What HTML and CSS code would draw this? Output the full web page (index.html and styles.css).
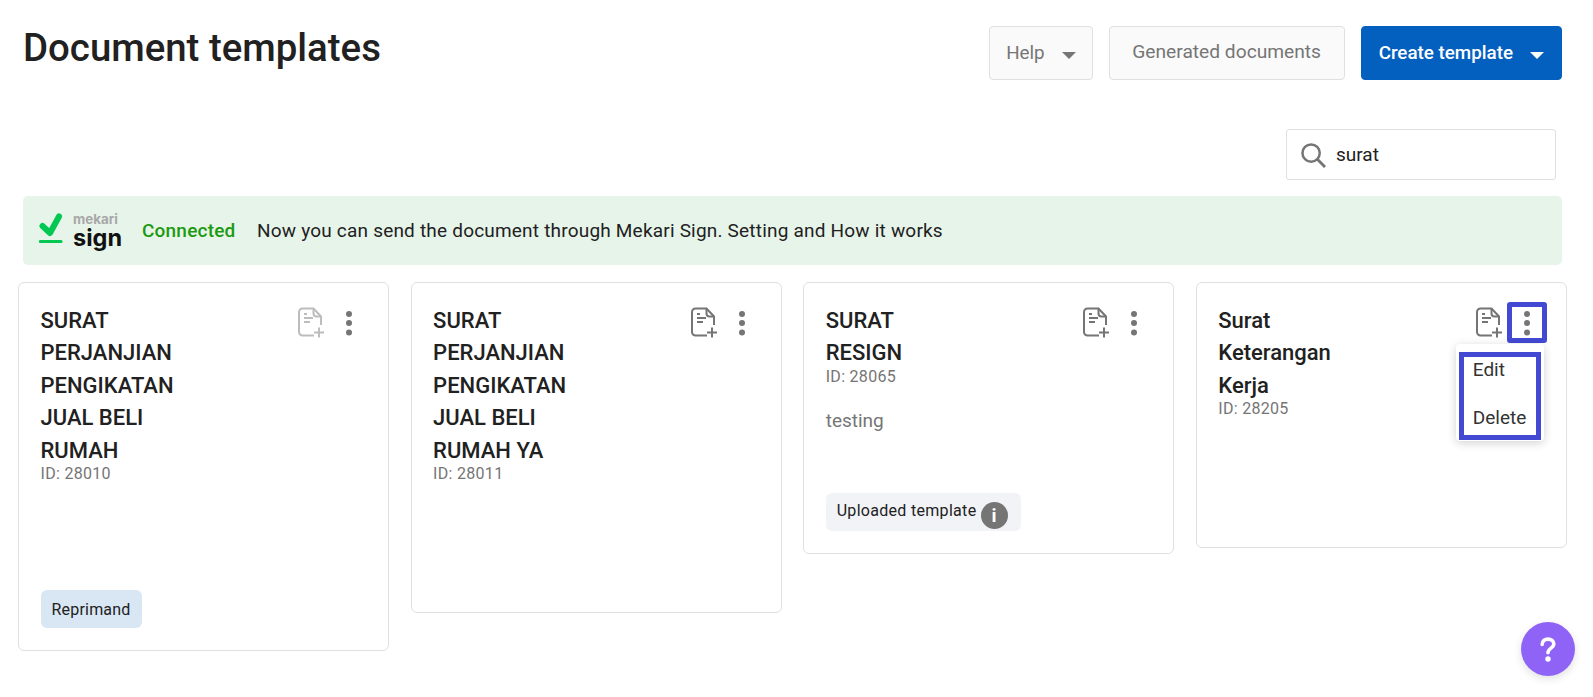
FILE: index.html
```html
<!DOCTYPE html>
<html>
<head>
	<meta charset="utf-8">
	<title>Document templates</title>
	<link rel="stylesheet" href="styles.css">
</head>
<body>
	<svg class="defs" width="0" height="0">
		<symbol id="doc-plus" viewBox="0 0 27 31">
			<path d="M23 18V9.5L15.5 1.5H4.500a3.500 3.500 0 0 0-3.500 3.500V25a3.500 3.500 0 0 0 3.500 3.500H16" fill="none" stroke="currentColor" stroke-width="2"/>
			<path d="M15.500 1.500V6.500a3 3 0 0 0 3 3H23" fill="none" stroke="currentColor" stroke-width="2"/>
			<path d="M6 7H9M6 11H15M6 15H12M21 20.500V30.500M16 25.500H26" fill="none" stroke="currentColor" stroke-width="2"/>
		</symbol>
		<symbol id="kebab" viewBox="0 0 8 26">
			<circle cx="4" cy="4" r="3"/>
			<circle cx="4" cy="13" r="3"/>
			<circle cx="4" cy="22.500" r="3"/>
		</symbol>
	</svg>

	<div class="page">
		<!-- header -->
		<div class="top">
			<h1>Document templates</h1>
			<div class="top-buttons">
				<button class="btn btn-help">Help<span class="caret"></span></button>
				<button class="btn btn-generated">Generated documents</button>
				<button class="btn btn-create">Create template<span class="caret"></span></button>
			</div>
		</div>

		<div class="search-row">
			<div class="search">
				<svg class="search-icon" viewBox="0 0 26 26">
					<circle cx="10.500" cy="10.500" r="9" fill="none" stroke="currentColor" stroke-width="2.600"/>
					<path d="M17 17L25 25" fill="none" stroke="currentColor" stroke-width="3"/>
				</svg>
				<span>surat</span>
			</div>
		</div>

		<!-- mekari sign -->
		<div class="banner">
			<div class="logo">
				<svg class="logo-check" viewBox="0 0 24 31">
					<path d="M3.500 13L11 20L20 3.500" fill="none" stroke="#00c853" stroke-width="6" stroke-linecap="round" stroke-linejoin="round"/>
					<path d="M1.500 28.500H22" fill="none" stroke="#00c853" stroke-width="3.200" stroke-linecap="round"/>
				</svg>
				<div class="logo-text">
					<div class="logo-small">mekari</div>
					<div class="logo-big">sign</div>
				</div>
			</div>
			<span class="connected">Connected</span>
			<span class="banner-text">Now you can send the document through Mekari Sign. Setting and How it works</span>
		</div>

		<!-- cards -->
		<div class="cards">
			<div class="card">
				<div class="card-head">
					<div class="card-title">SURAT PERJANJIAN PENGIKATAN JUAL BELI RUMAH</div>
					<div class="card-actions">
						<svg class="doc-icon doc-icon-off"><use href="#doc-plus"/></svg>
						<span class="kebab"><svg><use href="#kebab"/></svg></span>
					</div>
				</div>
				<div class="card-id">ID: 28010</div>
				<div class="card-body"></div>
				<span class="tag tag-blue">Reprimand</span>
			</div>

			<div class="card">
				<div class="card-head">
					<div class="card-title">SURAT PERJANJIAN PENGIKATAN JUAL BELI RUMAH YA</div>
					<div class="card-actions">
						<svg class="doc-icon"><use href="#doc-plus"/></svg>
						<span class="kebab"><svg><use href="#kebab"/></svg></span>
					</div>
				</div>
				<div class="card-id">ID: 28011</div>
				<div class="card-body"></div>
			</div>

			<div class="card">
				<div class="card-head">
					<div class="card-title">SURAT RESIGN</div>
					<div class="card-actions">
						<svg class="doc-icon"><use href="#doc-plus"/></svg>
						<span class="kebab"><svg><use href="#kebab"/></svg></span>
					</div>
				</div>
				<div class="card-id">ID: 28065</div>
				<div class="card-body">testing</div>
				<span class="tag tag-grey">Uploaded template<span class="info">i</span></span>
			</div>

			<div class="card">
				<div class="card-head">
					<div class="card-title">Surat Keterangan Kerja</div>
					<div class="card-actions">
						<svg class="doc-icon"><use href="#doc-plus"/></svg>
						<span class="kebab kebab-marked"><svg><use href="#kebab"/></svg></span>
						<div class="menu">
							<div class="menu-list">
								<div>Edit</div>
								<div>Delete</div>
							</div>
						</div>
					</div>
				</div>
				<div class="card-id">ID: 28205</div>
				<div class="card-body"></div>
			</div>
		</div>
	</div>

	<div class="fab">
		<svg viewBox="0 0 20 30">
			<path d="M3.500 9.500C3.500 5.500 6.500 3.500 10 3.500C13.500 3.500 16.500 5.500 16.500 9C16.500 13.500 10 13.500 10 18.500" fill="none" stroke="#fff" stroke-width="4" stroke-linecap="round"/>
			<circle cx="10" cy="25.500" r="3" fill="#fff"/>
		</svg>
	</div>
</body>
</html>
```

FILE: styles.css
```css
html,body{
	height:100%;
}
body{
	margin: 0;
	background: #fff;
	color: #212121;
	font-family: Roboto, "Liberation Sans", sans-serif;
	overflow: hidden;
}
.defs{
	position: absolute;
}
.page{
	padding: 26px 31px 0 23px;
}

/* header */
.top{
	display: flex;
	justify-content: space-between;
	align-items: flex-start;
}
h1{
	margin: 0;
	font-size: 38.400px;
	font-weight: 500;
	line-height: 44px;
}
.top-buttons{
	display: flex;
	gap: 16px;
}
.btn{
	height: 54px;
	padding: 0 17px;
	border: 1px solid #e0e0e0;
	border-radius: 4px;
	background: #fafafa;
	color: #757575;
	font-family: inherit;
	font-size: 18.800px;
	display: flex;
	align-items: center;
}
.btn-help{
	padding: 0 16px;
}
.btn-generated{
	width: 236px;
	justify-content: center;
	padding: 0 0 3px;
	font-size: 19.200px;
}
.btn-create{
	background: #0460bf;
	border-color: #0460bf;
	color: #fff;
	font-weight: 500;
}
.caret{
	display: inline-block;
	margin: 4px 0 0 17px;
	border-left: 7px solid transparent;
	border-right: 7px solid transparent;
	border-top: 7px solid currentColor;
}

/* search */
.search-row{
	display: flex;
	justify-content: flex-end;
	margin: 49px 6px 0 0;
}
.search{
	width: 270px;
	height: 51px;
	box-sizing: border-box;
	padding: 0 14px;
	border: 1px solid #e0e0e0;
	border-radius: 3px;
	display: flex;
	align-items: center;
	gap: 10px;
	font-size: 19px;
}
.search-icon{
	width: 25px;
	height: 25px;
	color: #757575;
	margin-top: 2px;
}

/* banner */
.banner{
	height: 69px;
	margin-top: 16px;
	padding-left: 16px;
	background: #e7f4ea;
	border-radius: 5px;
	display: flex;
	align-items: center;
	font-size: 19px;
	letter-spacing: 0.2px;
}
.logo{
	display: flex;
	align-items: center;
	gap: 10px;
	width: 103px;
}
.logo-check{
	width: 24px;
	height: 31px;
	margin-bottom: 4px;
}
.logo-text{
	font-family: Inter, sans-serif;
	font-weight: 700;
	letter-spacing: 0;
}
.logo-small{
	color: #a8a8a8;
	font-size: 13.400px;
	line-height: 15px;
}
.logo-big{
	color: #111;
	font-size: 23.500px;
	line-height: 22px;
}
.connected{
	color: #1b9a12;
	font-weight: 500;
	width: 115px;
}

/* cards */
.cards{
	display: grid;
	grid-template-columns: repeat(4,371px);
	gap: 21.600px;
	align-items: start;
	margin: 17px 0 0 -5px;
}
.card{
	box-sizing: border-box;
	padding: 22px 21.500px 22px;
	border: 1px solid #e0e0e0;
	border-radius: 6px;
	background: #fff;
}
.card-head{
	display: flex;
	justify-content: space-between;
	align-items: flex-start;
}
.card-title{
	width: 120px;
	font-size: 22px;
	font-weight: 500;
	line-height: 32.400px;
}
.card-actions{
	position: relative;
	display: flex;
	align-items: center;
	gap: 4px;
	margin: -3px -2.500px 0 0;
}
.doc-icon{
	width: 27px;
	height: 31px;
	color: #757575;
}
.doc-icon-off{
	color: #bdbdbd;
}
.kebab{
	width: 40px;
	height: 41px;
	box-sizing: border-box;
	display: flex;
	align-items: center;
	justify-content: center;
}
.kebab svg{
	width: 8px;
	height: 26px;
	fill: #757575;
}
.kebab-marked{
	border: 5px solid #4349d3;
	border-radius: 3px;
}
.menu{
	position: absolute;
	top: 42px;
	right: 3px;
	width: 88px;
	box-sizing: border-box;
	padding: 8px 3px 1px 3px;
	background: #fff;
	border-radius: 4px;
	box-shadow: 0 2px 10px rgba(0,0,0,0.18);
}
.menu-list{
	border: 5px solid #4349d3;
	padding: 1px 0 5px 9px;
	font-size: 19px;
	line-height: 24px;
	color: #333;
	display: flex;
	flex-direction: column;
	gap: 24px;
}
.card-id{
	font-size: 16px;
	line-height: 14px;
	color: #757575;
	letter-spacing: 0.3px;
}
.card-body{
	box-sizing: border-box;
	height: 109px;
	padding-top: 25px;
	font-size: 19px;
	line-height: 24px;
	color: #757575;
}
.tag{
	display: inline-flex;
	align-items: center;
	height: 38px;
	padding: 0 11px;
	border-radius: 6px;
	font-size: 16px;
	letter-spacing: 0.2px;
	vertical-align: top;
}
.tag-blue{
	background: #d9e6f4;
}
.tag-grey{
	background: #f2f3f7;
	padding-bottom: 2px;
	box-sizing: border-box;
	width: 195px;
	letter-spacing: 0.300px;
}
.info{
	position: absolute;
	width: 27px;
	height: 27px;
	margin: 10px 0 0 144px;
	border-radius: 50%;
	background: #757575;
	color: #fff;
	font-size: 19px;
	font-weight: 700;
	line-height: 27px;
	text-align: center;
}

/* help bubble */
.fab{
	position: fixed;
	left: 1521px;
	top: 622px;
	width: 54px;
	height: 54px;
	border-radius: 50%;
	background: #8f63f5;
	box-shadow: 0 3px 8px rgba(0,0,0,0.12);
	display: flex;
	align-items: center;
	justify-content: center;
}
.fab svg{
	width: 18px;
	height: 27px;
}
```
